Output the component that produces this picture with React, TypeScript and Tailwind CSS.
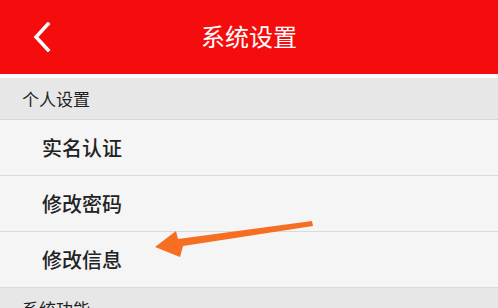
import React from "react";

const rows = ["实名认证", "修改密码", "修改信息"];

const Section: React.FC<{ title: string }> = ({ title }) => (
  <div className="h-[42px] shrink-0 bg-[#e7e7e7] border-b border-[#d6d6d6] flex items-center pl-[22px] text-[17px] text-[#1f1f1f]">
    {title}
  </div>
);

export default function App() {
  return (
    <div
      className="relative w-[498px] h-[308px] overflow-hidden bg-[#f5f5f5] flex flex-col"
      style={{ fontFamily: '"Noto Sans CJK SC", "Noto Sans", sans-serif' }}
    >
      <header className="h-[74px] shrink-0 bg-[#f50d0d] grid grid-cols-[1fr_auto_1fr] items-center">
        <div className="pl-[33px] flex items-center">
          <svg width="18" height="30" viewBox="0 0 18 30" fill="none">
            <path d="M15 2 L3 15 L15 28" stroke="white" strokeWidth="3.5" strokeLinecap="square" />
          </svg>
        </div>
        <h1 className="text-[24px] text-white leading-none -mt-[2px]">系统设置</h1>
        <div />
      </header>
      <div className="h-[4px] shrink-0 bg-[#fbfbfb]" />
      <Section title="个人设置" />
      {rows.map((r) => (
        <div
          key={r}
          className="h-[56px] shrink-0 border-b border-[#dadada] flex items-center pl-[42px] text-[20px] font-medium text-[#222]"
        >
          {r}
        </div>
      ))}
      <Section title="系统功能" />
      <svg className="absolute left-0 top-0 pointer-events-none" width="498" height="308" viewBox="0 0 498 308">
        <polygon
          points="312,221 313,226 183,246 180,257 155,247 176,231 178,239"
          fill="#f66e22"
        />
      </svg>
    </div>
  );
}
